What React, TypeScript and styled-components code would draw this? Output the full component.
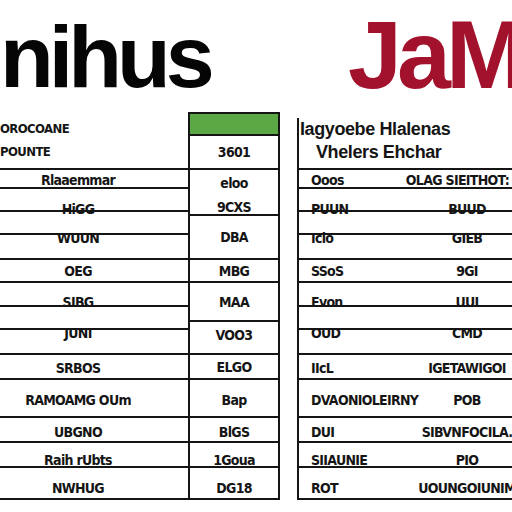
import styled, { createGlobalStyle } from "styled-components";

type Row = { h: number; label: string; value: string; shift: number };

// shared row grid for the label column and the right-hand table
const rows: Row[] = [
  { h: 19, label: "Rlaaemmar", value: "OLAG SIEITHOT: IiE", shift: 1 },
  { h: 23, label: "HiGG", value: "BUUD", shift: 9 },
  { h: 23, label: "WUUN", value: "GIEB", shift: 15 },
  { h: 25, label: "", value: "", shift: 0 },
  { h: 23, label: "OEG", value: "9GI", shift: 0 },
  { h: 24, label: "SIBG", value: "UUI", shift: 8 },
  { h: 23, label: "JUNI", value: "CMD", shift: 15 },
  { h: 25, label: "", value: "", shift: 0 },
  { h: 25, label: "SRBOS", value: "IGETAWIGOI", shift: 1 },
  { h: 38, label: "RAMOAMG OUm", value: "POB", shift: 2 },
  { h: 25, label: "UBGNO", value: "SIBVNFOCILA.", shift: 2 },
  { h: 25, label: "Raih  rUbts", value: "PIO", shift: 5 },
  { h: 32, label: "NWHUG", value: "UOUNGOIUNIM", shift: 5 },
];

const rightLabels = [
  "Ooos",
  "PUUN",
  "Iclo",
  "",
  "SSoS",
  "Evon",
  "OUD",
  "",
  "IIcL",
  "DVAONIOLEIRNY",
  "DUI",
  "SIIAUNIE",
  "ROT",
];

const values: { h: number; text: string; line: boolean; shift: number }[] = [
  { h: 25, text: "eloo", line: false, shift: 0 },
  { h: 21, text: "9CXS", line: true, shift: 2 },
  { h: 44, text: "DBA", line: true, shift: 0 },
  { h: 23, text: "MBG", line: true, shift: 0 },
  { h: 39, text: "MAA", line: true, shift: 0 },
  { h: 33, text: "VOO3", line: true, shift: -3 },
  { h: 25, text: "ELGO", line: true, shift: 0 },
  { h: 38, text: "Bap", line: true, shift: 2 },
  { h: 25, text: "BlGS", line: true, shift: 2 },
  { h: 25, text: "1Goua", line: true, shift: 5 },
  { h: 32, text: "DG18", line: true, shift: 5 },
];

const GlobalStyle = createGlobalStyle`
  html, body {
    margin: 0;
    background: #ffffff;
    overflow: hidden;
  }
  body {
    width: 512px;
    height: 512px;
  }
  * {
    box-sizing: border-box;
  }
`;

const Page = styled.div`
  width: 540px;
  color: #151515;
  font-family: "DejaVu Sans Condensed", "DejaVu Sans", "Liberation Sans", sans-serif;
`;

const TitleRow = styled.div`
  display: grid;
  grid-template-columns: 297px 1fr;
  height: 112px;
`;

const Title = styled.h1<{ $color: string; $size: number; $top: number; $indent: number }>`
  margin: 0;
  padding-top: ${(p) => p.$top}px;
  padding-left: ${(p) => p.$indent}px;
  font-family: "Liberation Sans", Arial, sans-serif;
  font-weight: 700;
  font-size: ${(p) => p.$size}px;
  line-height: 1;
  letter-spacing: -5px;
  color: ${(p) => p.$color};
  white-space: nowrap;
`;

const Tables = styled.div`
  display: flex;
  align-items: flex-start;
`;

const LeftTable = styled.div`
  display: flex;
  width: 280px;
`;

const LabelColumn = styled.div`
  width: 188px;
  display: flex;
  flex-direction: column;
`;

const ValueColumn = styled.div`
  width: 92px;
  display: flex;
  flex-direction: column;
  border-left: 2px solid #151515;
  border-right: 2px solid #151515;
  border-top: 2px solid #151515;
`;

const GreenBar = styled.div`
  height: 22px;
  background: #5ba845;
  border-bottom: 2px solid #151515;
`;

const HeaderBlock = styled.div<{ $h: number; $pad: number }>`
  height: ${(p) => p.$h}px;
  padding-top: ${(p) => p.$pad}px;
  border-bottom: 2px solid #151515;
  display: flex;
  flex-direction: column;
`;

const HeaderLine = styled.span<{ $size: number; $indent: number; $condensed?: boolean }>`
  display: block;
  padding-left: ${(p) => p.$indent}px;
  font-family: ${(p) =>
    p.$condensed
      ? `"DejaVu Sans Condensed", "DejaVu Sans", sans-serif`
      : `"Liberation Sans", Arial, sans-serif`};
  font-weight: 700;
  font-size: ${(p) => p.$size}px;
  line-height: 23px;
  letter-spacing: ${(p) => (p.$condensed ? "-0.6px" : "-0.4px")};
  white-space: nowrap;
`;

const Cell = styled.div<{ $h: number; $line?: boolean; $align?: "start" | "center" }>`
  height: ${(p) => p.$h}px;
  border-bottom: ${(p) => (p.$line === false ? "none" : "2px solid #151515")};
  display: flex;
  align-items: center;
  justify-content: ${(p) => (p.$align === "start" ? "flex-start" : "center")};
  white-space: nowrap;
`;

const LabelCell = styled(Cell)`
  padding-right: 32px;
`;

const CellText = styled.span<{ $shift: number }>`
  font-size: 14px;
  font-weight: 700;
  font-stretch: condensed;
  letter-spacing: -0.7px;
  transform: translateY(${(p) => p.$shift}px);
`;

const RightTable = styled.div`
  margin-left: 17px;
  margin-top: 6px;
  width: 240px;
  border-left: 2px solid #151515;
`;

const RightRow = styled.div`
  display: grid;
  grid-template-columns: 100px 136px;
`;

const RightLabel = styled(Cell)`
  padding-left: 12px;
`;

export default function App() {
  return (
    <Page>
      <GlobalStyle />
      <TitleRow>
        <Title $color="#050505" $size={88} $top={13} $indent={-3}>
          nihus
        </Title>
        <Title $color="#a3122d" $size={97} $top={6} $indent={51}>
          JaM
        </Title>
      </TitleRow>

      <Tables>
        <LeftTable>
          <LabelColumn>
            <HeaderBlock $h={58} $pad={5}>
              <HeaderLine $size={13} $indent={0} $condensed>
                OROCOANE
              </HeaderLine>
              <HeaderLine $size={13} $indent={0} $condensed>
                POUNTE
              </HeaderLine>
            </HeaderBlock>
            {rows.map((r, i) => (
              <LabelCell key={i} $h={r.h}>
                <CellText $shift={r.shift}>{r.label}</CellText>
              </LabelCell>
            ))}
          </LabelColumn>

          <ValueColumn>
            <GreenBar />
            <Cell $h={34}>
              <CellText $shift={0}>3601</CellText>
            </Cell>
            {values.map((v, i) => (
              <Cell key={i} $h={v.h} $line={v.line}>
                <CellText $shift={v.shift}>{v.text}</CellText>
              </Cell>
            ))}
          </ValueColumn>
        </LeftTable>

        <RightTable>
          <HeaderBlock $h={52} $pad={0}>
            <HeaderLine $size={18} $indent={1}>
              Iagyoebe Hlalenas
            </HeaderLine>
            <HeaderLine $size={18} $indent={17}>
              Vhelers Ehchar
            </HeaderLine>
          </HeaderBlock>
          {rows.map((r, i) => (
            <RightRow key={i}>
              <RightLabel $h={r.h} $align="start">
                <CellText $shift={r.shift}>{rightLabels[i]}</CellText>
              </RightLabel>
              <Cell $h={r.h}>
                <CellText $shift={r.shift}>{r.value}</CellText>
              </Cell>
            </RightRow>
          ))}
        </RightTable>
      </Tables>
    </Page>
  );
}
